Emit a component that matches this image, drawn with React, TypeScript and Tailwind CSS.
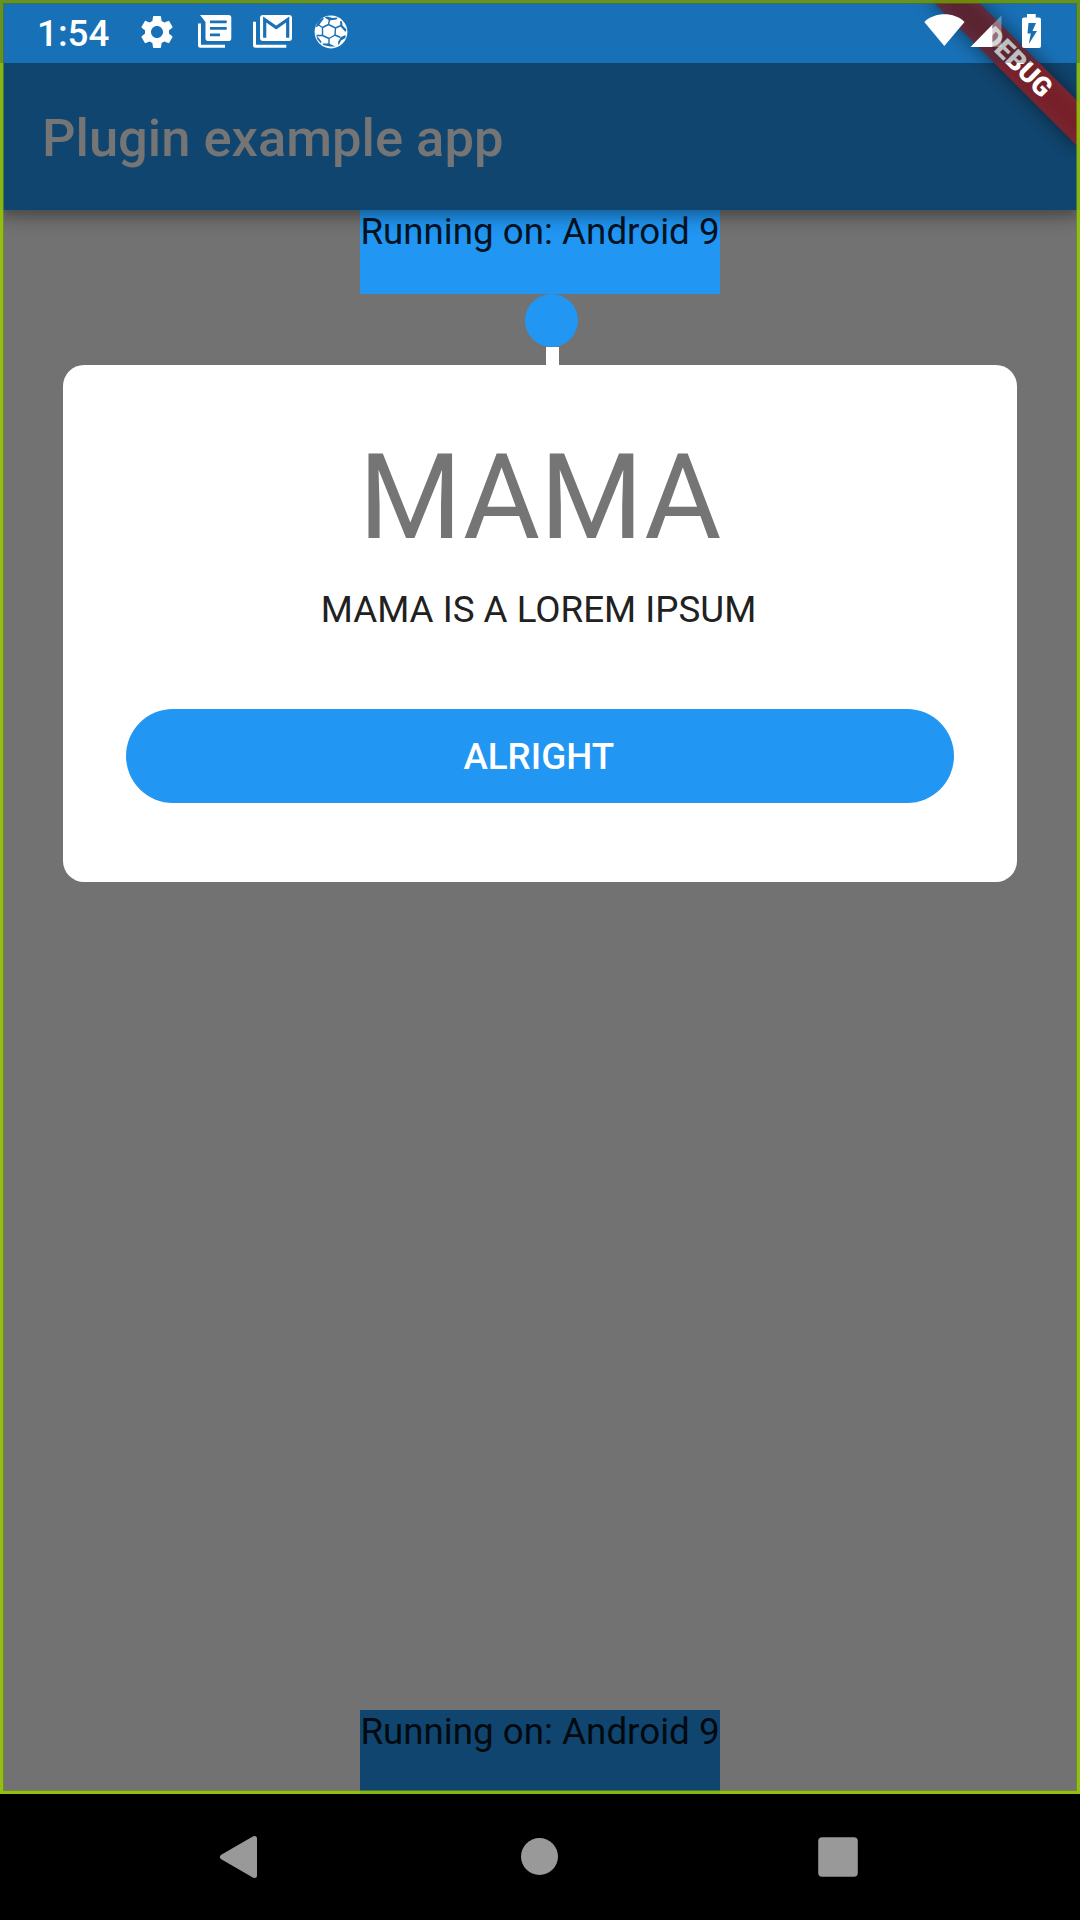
import React from "react";
import { MdSettings } from "react-icons/md";

function NewsIcon() {
  return (
    <svg width="35" height="35" viewBox="0 0 35 35" fill="none">
      <path d="M2.5 9.5V31.2a1 1 0 0 0 1 1H28" stroke="white" strokeWidth="3" />
      <path
        fillRule="evenodd"
        fill="white"
        d="M3 1H31.5a2.8 2.8 0 0 1 2.8 2.8V24.2a2.8 2.8 0 0 1-2.8 2.8H11.3a2.8 2.8 0 0 1-2.8-2.8V8ZM13 6.5v2.700H29.7V6.500ZM13 13v2.700H29.7v-2.700ZM13 19.500v2.700h10v-2.700Z"
      />
    </svg>
  );
}

function MailIcon() {
  return (
    <svg width="41" height="35" viewBox="0 0 41 35" fill="none">
      <path d="M2.5 7.7V31.2a1 1 0 0 0 1 1H34.3" stroke="white" strokeWidth="3" />
      <rect x="8" y="1" width="32" height="26" rx="3" fill="white" />
      <path d="M12.7 23.800V5.500L24.200 13.500L35.700 5.500V23.800" stroke="#1a70b7" strokeWidth="3.200" />
    </svg>
  );
}

function BallIcon() {
  return (
    <svg width="34" height="34" viewBox="0 0 34 34">
      <circle cx="17" cy="17" r="16.400" fill="white" />
      <path
        d="M8.500 12.500L14.500 9.500L21.500 13L21 20L15 23.500L8.500 20.500ZM8.500 12.500L4 9.500M14.500 9.500L15.500 4.500M21.500 13L27 10.500M21 20L26.500 22.500M15 23.500L15 29M8.500 20.500L3 20.500"
        stroke="#1a70b7"
        strokeWidth="1.400"
        strokeLinejoin="round"
        fill="none"
      />
      <g fill="#1a70b7">
        <path d="M1.500 12.500L4.500 11L6.500 8L10 3.500L8 3L4 6.500Z" />
        <path d="M10.500 2.500L15.500 5.500L22.500 4.500L23.500 2.500L18.500 3L13.500 1.500Z" />
        <path d="M26 6L26.500 11.500L31.500 17L32.500 14.500L28.500 10.500L28 6.500Z" />
        <path d="M31.500 20L27 22L24 27L24.500 30.500L27 25.500L31.500 23Z" />
        <path d="M8.500 28.500L15 28.500L21.500 31.500L16 31.500L9 30Z" />
        <path d="M1.500 18L3 21L7.500 26.500L7 28.500L3.500 24.500Z" />
      </g>
    </svg>
  );
}

function StatusBar() {
  return (
    <div className="absolute inset-x-0 top-0 z-30 flex h-[63px] items-start bg-black/25 text-white">
      <span className="ml-[37px] mt-[12px] w-[100px] text-[36.750px] font-medium leading-[43px]">1:54</span>
      <MdSettings className="mt-[12px] size-[40px]" />
      <div className="ml-[20px] mt-[14px]">
        <NewsIcon />
      </div>
      <div className="ml-[20px] mt-[14px]">
        <MailIcon />
      </div>
      <div className="ml-[21px] mt-[14.500px]">
        <BallIcon />
      </div>
      <svg className="ml-auto mr-[39px] mt-[13px]" width="117" height="36" viewBox="0 0 117 36">
        <path fill="white" d="M0.300 9C11-1.200 30-1.200 40.500 9L20.300 33Z" />
        <path fill="white" d="M46.500 34L68.500 11.500V34Z" />
        <path fill="white" fillOpacity="0.35" d="M68.500 11.500L77.500 2.500V34H68.500Z" />
        <path
          fill="white"
          fillRule="evenodd"
          d="M103 1H111.700V4.600H115a2 2 0 0 1 2 2V33a2 2 0 0 1-2 2H100a2 2 0 0 1-2-2V6.600a2 2 0 0 1 2-2H103ZM104.500 10L103.500 20.500H106.800L104.800 31L113 18H108.500L112 10Z"
        />
      </svg>
    </div>
  );
}

function DebugBanner() {
  return (
    <div className="absolute right-0 top-0 z-20 size-[240px] overflow-hidden">
      <div className="absolute left-[71.900px] top-[47.400px] h-[31.500px] w-[210px] rotate-45">
        <div className="absolute inset-0 bg-black/50 blur-[9.600px]" />
        <div className="relative flex h-full items-center justify-center bg-[#b71c1c]/[0.63] text-[26.800px] font-black leading-none text-white">
          DEBUG
        </div>
      </div>
    </div>
  );
}

function PlatformLabel({ className }: { className: string }) {
  return (
    <div className={`h-[84px] w-[360px] whitespace-nowrap text-center text-[36.750px] leading-[43px] ${className}`}>
      Running on: Android 9
    </div>
  );
}

function CoachCard() {
  return (
    <section className="flex h-[517.600px] w-[954px] flex-col items-center rounded-[21px] bg-white pt-[64px]">
      <h2 className="text-[118.125px] leading-[138px] text-[#757575]">MAMA</h2>
      <p className="mr-[3px] mt-[21px] text-[36.750px] leading-[43px] text-[#212121]">MAMA IS A LOREM IPSUM</p>
      <button className="mt-[78px] flex h-[94.500px] w-[828px] items-center justify-center rounded-full bg-[#2196f3] pr-[2.500px] pt-[2px] text-[36.750px] font-medium leading-[43px] text-white">
        ALRIGHT
      </button>
    </section>
  );
}

function NavigationBar() {
  return (
    <nav className="flex h-[126px] items-center justify-between bg-black px-[210px]">
      <svg width="60" height="60" viewBox="0 0 60 60">
        <path d="M12.500 30L44.500 11.500V48.500Z" fill="#999" stroke="#999" strokeWidth="5" strokeLinejoin="round" />
      </svg>
      <svg width="60" height="60" viewBox="0 0 60 60">
        <circle cx="29.500" cy="29.500" r="18.500" fill="#999" />
      </svg>
      <svg width="60" height="60" viewBox="0 0 60 60">
        <rect x="8.200" y="10.200" width="39.600" height="39.600" rx="4" fill="#999" />
      </svg>
    </nav>
  );
}

export default function App() {
  return (
    <div className="h-[1920px] w-[1080px] overflow-hidden bg-black font-[Roboto,sans-serif]">
      <main className="relative flex h-[1794px] flex-col overflow-hidden bg-[#727272]">
        <div className="relative z-[11] h-[63px] shrink-0 bg-[#2196f3]" />
        <header className="relative z-10 flex h-[147px] shrink-0 items-center bg-[#10456f] pl-[42px] shadow-[0_5.250px_10.500px_-2.600px_rgba(0,0,0,0.2),0_10.500px_13px_0_rgba(0,0,0,0.14),0_2.600px_26px_0_rgba(0,0,0,0.12)]">
          <h1 className="mt-[3px] text-[52.500px] font-medium leading-[62px] text-[#757575]">Plugin example app</h1>
        </header>
        <div className="flex flex-1 flex-col items-center">
          <PlatformLabel className="bg-[#2196f3] text-[#04131f]" />
          <div className="ml-[23px] size-[52.500px] rounded-full bg-[#2196f3]" />
          <div className="ml-[25px] h-[18px] w-[13px] bg-white" />
          <CoachCard />
          <PlatformLabel className="mt-auto bg-[#10456f] text-[#020a10]" />
        </div>
        <DebugBanner />
        <div className="pointer-events-none absolute inset-0 z-20 border-[3px] border-[#99cc00]/85 shadow-[inset_0_0_0_1px_rgba(115,150,30,0.6)]" />
        <StatusBar />
      </main>
      <NavigationBar />
    </div>
  );
}
